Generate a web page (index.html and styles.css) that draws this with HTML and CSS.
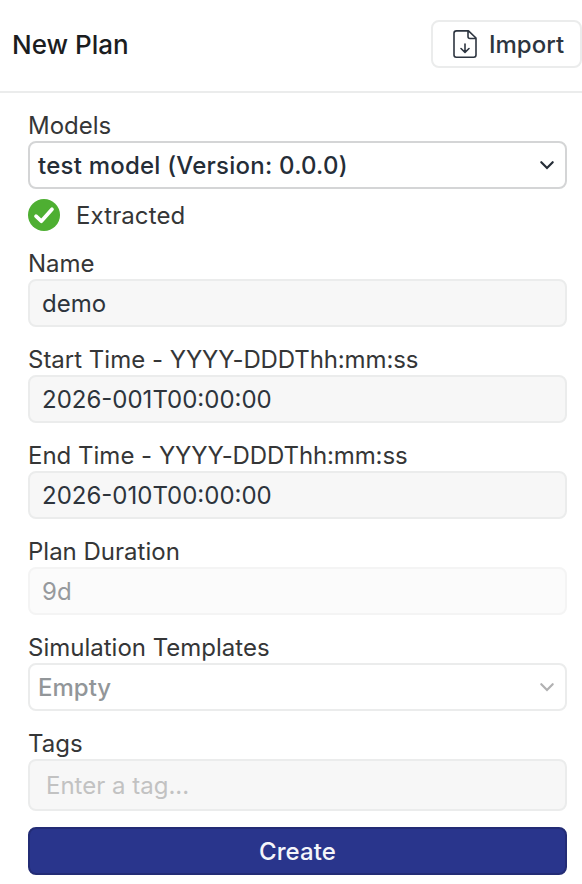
FILE: index.html
```html
<!DOCTYPE html>
<html lang="en">
<head>
<meta charset="utf-8">
<title>New Plan</title>
<link rel="stylesheet" href="styles.css">
</head>
<body>
<header class="header">
  <h1 class="title">New Plan</h1>
  <button class="import" type="button">
    <svg width="24" height="28" viewBox="0 0 24 28" fill="none" stroke="#2d3540" stroke-width="1.6" stroke-linecap="round" stroke-linejoin="round"><path d="M3.5 .9H15.5L23 8V25Q23 27.2 20.7 27.2H3.3Q1 27.2 1 25V3.2Q1 .9 3.5 .9ZM15 1V6.5Q15 8.5 17 8.5H23M12 14V22M8 18.5L12 22.3L16 18.5"/></svg>
    <span>Import</span>
  </button>
</header>
<main class="form">
  <div class="label">Models</div>
  <div class="control select version"><span>test model (Version: 0.0.0)</span>
    <svg width="16" height="10" viewBox="0 0 16 10" fill="none" stroke="currentColor" stroke-width="2.2" stroke-linecap="round"><path d="M2.3 2.2L8 8L13.7 2.2"/></svg></div>
  <div class="status">
    <svg width="32" height="32" viewBox="0 0 32 32" fill="none"><circle cx="16" cy="16" r="16" fill="#4eaf32"/><path d="M8 17.2L13.3 22.2L24 10.3" stroke="#fff" stroke-width="3.7" stroke-linecap="round" stroke-linejoin="round"/></svg>
    <span>Extracted</span>
  </div>
  <div class="label">Name</div>
  <div class="control input">demo</div>
  <div class="label">Start Time - <span class="format">YYYY-DDDThh:mm:ss</span></div>
  <div class="control input">2026-001T00:00:00</div>
  <div class="label">End Time - <span class="format">YYYY-DDDThh:mm:ss</span></div>
  <div class="control input">2026-010T00:00:00</div>
  <div class="label">Plan Duration</div>
  <div class="control input disabled">9d</div>
  <div class="label">Simulation Templates</div>
  <div class="control select muted"><span>Empty</span>
    <svg width="16" height="10" viewBox="0 0 16 10" fill="none" stroke="#b1b1b2" stroke-width="2.2" stroke-linecap="round"><path d="M2.3 2.2L8 8L13.7 2.2"/></svg></div>
  <div class="label">Tags</div>
  <div class="control input tags">Enter a tag...</div>
  <button class="create" type="button">Create</button>
</main>
</body>
</html>
```
FILE: styles.css
```css
* { box-sizing: border-box; }
body { margin: 0; background: #fff; color: #353637; font: 24px/32px Inter, sans-serif; overflow: hidden; }
svg { flex: none; display: block; }
.header { display: flex; justify-content: space-between; height: 93px; padding: 20px 0 0 12px; border-bottom: 2px solid #ebecec; }
.title { margin: 0; font-size: 26px; line-height: 50px; font-weight: 500; color: #1b1d1f; }
.import { display: flex; align-items: center; gap: 12px; width: 151px; height: 48px; padding: 0 0 0 20px; border: 2px solid #ebecec; border-radius: 8px; background: #fff; font: 500 24px Inter, sans-serif; color: #2d3540; }
.form { padding: 16px 15px 0 28px; }
.label { height: 32px; line-height: 34px; }
.format { letter-spacing: -.12px; }
.control { height: 48px; margin-bottom: 16px; border: 2px solid #ebecec; border-radius: 8px; display: flex; align-items: center; line-height: 44px; }
.input { padding: 2px 12px 0; background: #f7f7f7; color: #2d343c; }
.select { padding: 0 10px 0 8px; justify-content: space-between; font-weight: 500; border-color: #d4d5d6; color: #252d37; }
.select span { padding-top: 2px; }
.version { letter-spacing: .23px; }
.status { display: flex; align-items: center; gap: 16px; height: 32px; margin: -6px 0 16px; }
.status span { padding-top: 2px; letter-spacing: .1px; }
.disabled { background: #fbfbfb; border-color: #f4f4f4; color: #96999d; }
.muted { color: #929699; border-color: #ebecec; }
.tags { height: 52px; padding: 2px 16px 0; color: #c2c2c2; }
.create { display: block; width: 100%; height: 48px; padding: 0; border: 2px solid #232c75; border-radius: 8px; background: #29358c; color: #f4f5fa; font: 500 24px Inter, sans-serif; letter-spacing: .1px; }
```
